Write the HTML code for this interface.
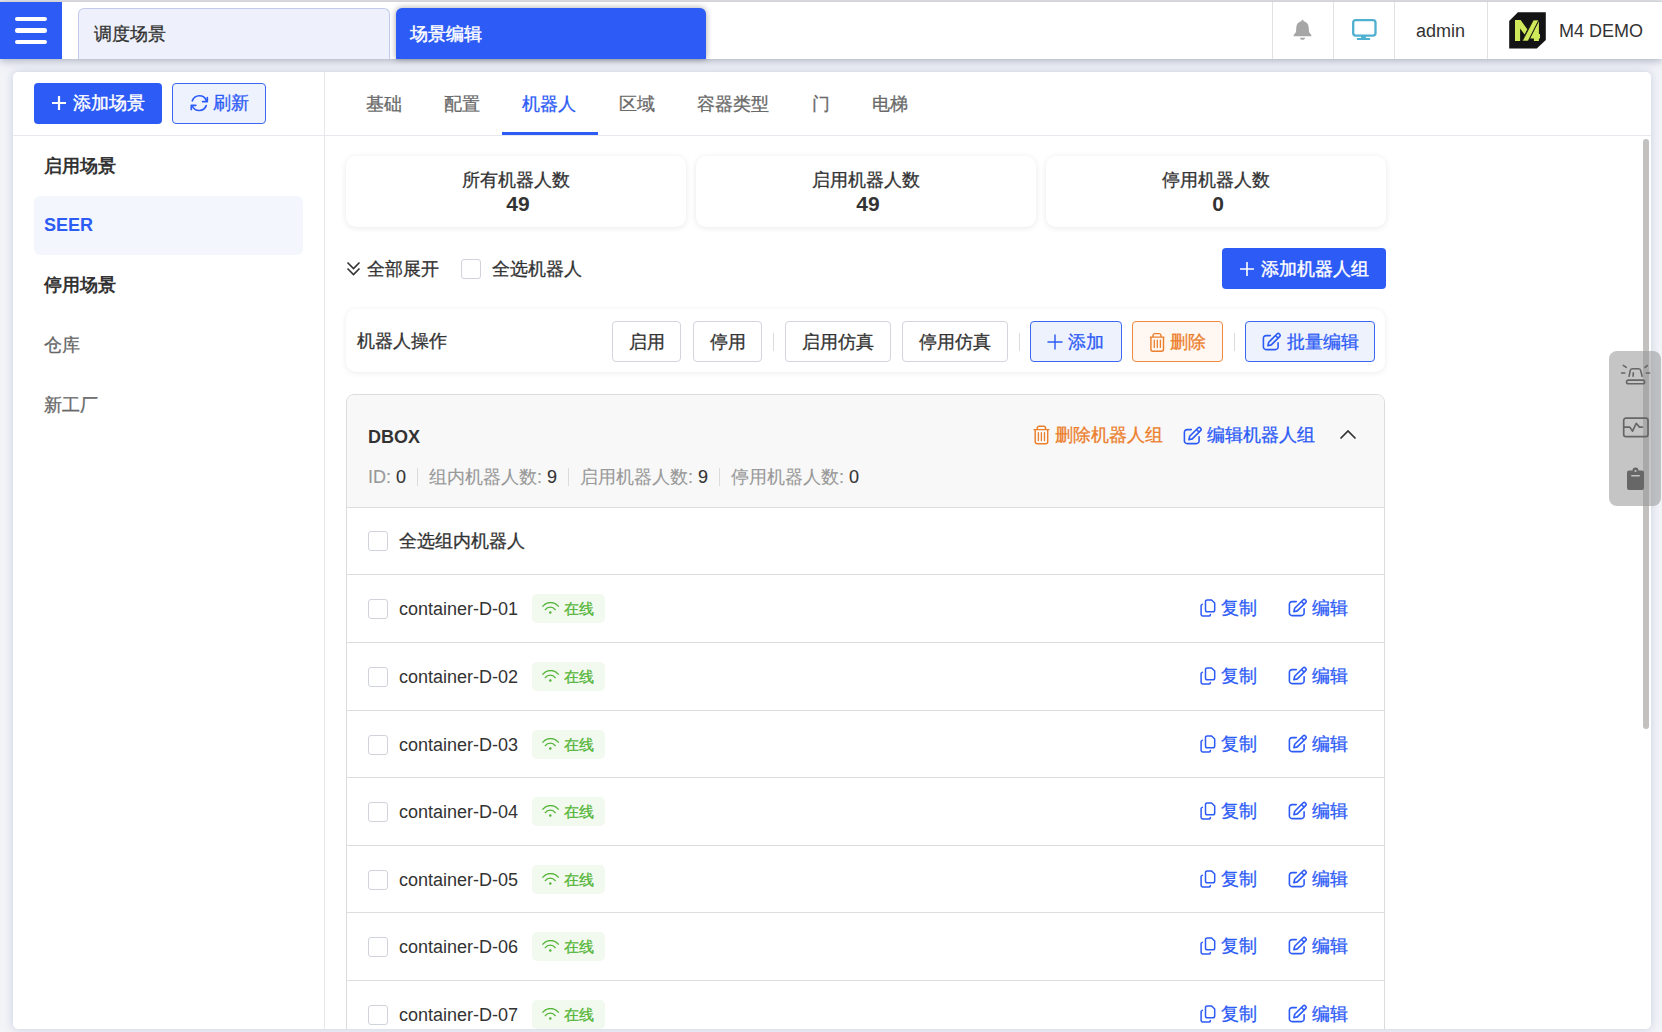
<!DOCTYPE html>
<html><head><meta charset="utf-8">
<style>
*{box-sizing:border-box;margin:0;padding:0}
html,body{width:1662px;height:1032px;overflow:hidden}
body{font-family:"Liberation Sans",sans-serif;font-size:18px;-webkit-text-stroke:0.3px currentColor;color:#333;background:#f2f4f8;position:relative}
.a{position:absolute}
svg{display:block}
.topline{left:0;top:0;width:1662px;height:1px;background:#e8ebf2}
.header{left:0;top:1px;width:1662px;height:58px;background:#fff;border-top:1px solid #d4d4d4;box-shadow:0 2px 8px rgba(100,112,140,.5)}
.ham{left:0;top:2px;width:62px;height:57px;background:#2d5bf6}
.ham i{position:absolute;left:15px;width:32px;height:4.6px;border-radius:2.3px;background:#fff}
.tab{top:7px;height:52px;border-radius:6px 6px 0 0;line-height:52px;padding-left:14px}
.tab1{left:78px;top:7.6px;height:51.4px;width:312px;background:#eef1fc;border:1px solid #c3c9e8;border-bottom:none;color:#333;padding-left:15px;line-height:51px}
.tab2{left:396px;width:310px;top:8px;height:51px;background:#2d5bf6;color:#fff;-webkit-text-stroke:0.45px #fff;box-shadow:0 0 6px rgba(0,0,0,.35)}
.sep{top:2px;width:1px;height:57px;background:#e2e2e2}
.card{left:13px;top:72px;width:1638px;height:957px;background:#fff;border-radius:5px;box-shadow:0 0 10px rgba(150,160,190,.45);overflow:hidden}
.vline{left:311px;top:0;width:1px;height:957px;background:#e8e8ea}
.hline{left:0;top:63px;width:1638px;height:1px;background:#e6e8ee}
.btn{height:41px;border-radius:4px;display:flex;align-items:center;justify-content:center;line-height:20px}
.bprim{background:#2d5bf6;color:#fff;-webkit-text-stroke:0.4px #fff}
.bout{background:#edf2fd;border:1px solid #3a66f2;color:#2d5bf6}
.bdef{background:#fff;border:1px solid #d3d5dd;color:#333}
.bor{background:#fff8f2;border:1px solid #f0893d;color:#ec7f2c}
.nav{left:31px;line-height:24px}
.tabs div{position:absolute;top:19.6px;line-height:24px;color:#6a6a6a}
.stat{top:156px;width:340px;height:71px;background:#fff;border-radius:10px;box-shadow:0 1px 6px rgba(0,0,0,.09);text-align:center}
.stat .t{position:absolute;left:0;right:0;top:12px;line-height:24px}
.stat .n{-webkit-text-stroke:0;position:absolute;left:4px;right:0;top:36px;line-height:24px;font-weight:bold;font-size:21px}
.cb{width:20px;height:20px;border:1px solid #d0d3dc;border-radius:3px;background:#fff}
.dv{width:1px;height:18px;background:#dcdcdc}
.tag{height:29px;padding:0 11.5px 0 9.5px;background:#f2f9ef;border-radius:5px;display:flex;align-items:center;color:#52b536;font-size:15px;line-height:20px}
.tag span{position:relative;top:0px}
.tag svg{margin-right:5px}
.act{display:flex;align-items:center;color:#2d5bf6;line-height:24px}
.act svg{margin-right:5px}
.act.r{margin-top:-1px}
.g{color:#999}
.lt{-webkit-text-stroke:0}
.dv2{display:inline-block;width:1px;height:18px;background:#dcdcdc;margin:0 11px;vertical-align:-3px}
</style></head><body>
<div class="a topline"></div>
<div class="a header"></div>
<div class="a ham"><i style="top:14.8px"></i><i style="top:26.2px"></i><i style="top:37.6px"></i></div>
<div class="a tab tab1">调度场景</div>
<div class="a tab tab2">场景编辑</div>
<div class="a sep" style="left:1272px"></div>
<div class="a sep" style="left:1333px"></div>
<div class="a sep" style="left:1394px"></div>
<div class="a sep" style="left:1487px"></div>
<!-- bell -->
<svg class="a" style="left:1292px;top:19px" width="21" height="23" viewBox="0 0 21 23"><path d="M10.5 0.8C11.3 0.8 11.6 1.5 11.6 2.2C14.6 2.9 16.5 5 16.7 8.2L17 13.1L19.4 16.2V17.2H1.6V16.2L4 13.1L4.3 8.2C4.5 5 6.4 2.9 9.4 2.2C9.4 1.5 9.7 0.8 10.5 0.8Z" fill="#a6a6a6"/><path d="M8 18.7H13C13 20 11.9 20.8 10.5 20.8S8 20 8 18.7Z" fill="#a6a6a6"/></svg>
<!-- monitor -->
<svg class="a" style="left:1351px;top:18px" width="26" height="24" viewBox="0 0 26 24"><rect x="2.2" y="2.2" width="22.3" height="15.4" rx="2.6" fill="none" stroke="#4fb0d0" stroke-width="2.3"/><rect x="10.1" y="18" width="4.8" height="2.2" fill="#4fb0d0"/><rect x="5.9" y="19.9" width="13.2" height="2.1" rx="0.6" fill="#4fb0d0"/></svg>
<div class="a lt" style="left:1416px;top:19px;line-height:24px">admin</div>
<!-- logo -->
<svg class="a" style="left:1509px;top:12px" width="37" height="37" viewBox="0 0 37 37"><path d="M0.2 9L8.9 0.3H36.8V27.9L27.8 36.6H0.2z" fill="#141414"/><path d="M6 8H11.6L18.3 17.3 15.6 22.6 11.1 16.4V29.1H6z" fill="#d0e95a"/><path d="M29.9 9.2V22.1H31V26.4H29.9V29.1H24.9V26.4H21.2z" fill="#d0e95a"/><path d="M13.3 29.1H19.1L29.8 8H24.4z" fill="#d0e95a" stroke="#141414" stroke-width="0.7"/></svg>
<div class="a lt" style="left:1559px;top:19px;line-height:24px">M4 DEMO</div>

<div class="a card">
  <div class="a vline"></div>
  <div class="a hline"></div>
  <div class="a btn bprim" style="left:21px;top:10.5px;width:128px"><svg width="16" height="16" viewBox="0 0 16 16" style="margin-right:6px"><path d="M8 1v14M1 8h14" stroke="#fff" stroke-width="2.2"/></svg>添加场景</div>
  <div class="a btn bout" style="left:159px;top:10.5px;width:94px"><svg width="19" height="18" viewBox="0 0 19 18" style="margin-right:4px"><path d="M2.3 6.8A7.5 7.5 0 0 1 16.4 6.6" fill="none" stroke="#2d5bf6" stroke-width="1.7" stroke-linecap="round"/><path d="M17.3 3.5V7.6H12.6" fill="none" stroke="#2d5bf6" stroke-width="1.7" stroke-linecap="round" stroke-linejoin="round"/><path d="M16.2 11.6A7.5 7.5 0 0 1 2.3 12" fill="none" stroke="#2d5bf6" stroke-width="1.7" stroke-linecap="round"/><path d="M1.3 15.5V11.3H5.8" fill="none" stroke="#2d5bf6" stroke-width="1.7" stroke-linecap="round" stroke-linejoin="round"/></svg>刷新</div>
  <div class="a nav lt" style="top:81.5px;font-weight:bold">启用场景</div>
  <div class="a" style="left:21px;top:124px;width:268.5px;height:59px;background:#f3f6fd;border-radius:6px"></div>
  <div class="a nav lt" style="top:141px;font-weight:bold;color:#2d5bf6">SEER</div>
  <div class="a nav lt" style="top:201px;font-weight:bold">停用场景</div>
  <div class="a nav" style="top:261px;color:#666">仓库</div>
  <div class="a nav" style="top:321px;color:#666">新工厂</div>

  <div class="tabs">
    <div style="left:353px">基础</div>
    <div style="left:431px">配置</div>
    <div style="left:509px;color:#2d5bf6">机器人</div>
    <div style="left:606px">区域</div>
    <div style="left:684px">容器类型</div>
    <div style="left:799px">门</div>
    <div style="left:859px">电梯</div>
  </div>
  <div class="a" style="left:489px;top:60px;width:96px;height:2.5px;background:#2d5bf6"></div>
  <div class="a content" style="left:312px;top:64px;width:1326px;height:893px;overflow:hidden">
    <div class="a stat" style="left:21px;top:20px"><div class="t">所有机器人数</div><div class="n">49</div></div>
    <div class="a stat" style="left:371px;top:20px"><div class="t">启用机器人数</div><div class="n">49</div></div>
    <div class="a stat" style="left:721px;top:20px"><div class="t">停用机器人数</div><div class="n">0</div></div>
    <svg class="a" style="left:21px;top:124px" width="15" height="16" viewBox="0 0 15 16"><path d="M1.5 2.5l6 6 6-6M1.5 8.5l6 6 6-6" fill="none" stroke="#333" stroke-width="1.6"/></svg>
    <div class="a" style="left:42px;top:120.5px;line-height:24px">全部展开</div>
    <div class="a cb" style="left:136px;top:123px"></div>
    <div class="a" style="left:167px;top:120.5px;line-height:24px">全选机器人</div>
    <div class="a btn bprim" style="left:897px;top:112px;width:164px"><svg width="16" height="16" viewBox="0 0 16 16" style="margin-right:6px"><path d="M8 1v14M1 8h14" stroke="#fff" stroke-width="1.6"/></svg>添加机器人组</div>
    <div class="a toolbar" style="left:21px;top:173px;width:1039px;height:63px;background:#fff;border-radius:10px;box-shadow:0 1px 6px rgba(0,0,0,.08)">
      <div class="a" style="left:11px;top:20px;line-height:24px">机器人操作</div>
      <div class="a btn bdef" style="left:266px;top:12px;width:69px">启用</div>
      <div class="a btn bdef" style="left:347px;top:12px;width:69px">停用</div>
      <div class="a dv" style="left:427px;top:24px"></div>
      <div class="a btn bdef" style="left:439px;top:12px;width:106px">启用仿真</div>
      <div class="a btn bdef" style="left:556px;top:12px;width:106px">停用仿真</div>
      <div class="a dv" style="left:673px;top:24px"></div>
      <div class="a btn bout" style="left:684px;top:12px;width:92px"><svg width="16" height="16" viewBox="0 0 16 16" style="margin-right:5px;margin-left:-1px"><path d="M8 0.5v15M0.5 8h15" stroke="#2d5bf6" stroke-width="1.45"/></svg>添加</div>
      <div class="a btn bor" style="left:786px;top:12px;width:91px"><svg width="16" height="20" viewBox="0 0 16 20" style="margin-right:5px"><path d="M4 5V3.6A2 2 0 0 1 6 1.6H10A2 2 0 0 1 12 3.6V5M0.8 5.1H15.4M1.9 5.1V17.2A2 2 0 0 0 3.9 19.2H12.5A2 2 0 0 0 14.5 17.2V5.1" fill="none" stroke="#ec7f2c" stroke-width="1.45" stroke-linejoin="round"/><path d="M5.3 8.2V15.4M8.3 8.2V15.4M11.4 8.2V15.4" stroke="#ec7f2c" stroke-width="1.3" stroke-linecap="round"/></svg>删除</div>
      <div class="a dv" style="left:888px;top:24px"></div>
      <div class="a btn bout" style="left:899px;top:12px;width:130px"><svg width="19" height="19" viewBox="0 0 19 19" style="margin-right:6px"><path d="M8.3 3.6H4.1A2.7 2.7 0 0 0 1.4 6.3V14.9A2.7 2.7 0 0 0 4.1 17.6H13.4A2.7 2.7 0 0 0 16.1 14.9V10.8" fill="none" stroke="#2d5bf6" stroke-width="1.6" stroke-linecap="round"/><path d="M5.9 13.7L6.7 10.3L15 2A1.7 1.7 0 0 1 17.4 2L17.6 2.2A1.7 1.7 0 0 1 17.6 4.6L9.3 12.9Z" fill="none" stroke="#2d5bf6" stroke-width="1.6" stroke-linejoin="round"/><path d="M13.6 3.6L16 6" stroke="#2d5bf6" stroke-width="1.5"/></svg>批量编辑</div>
    </div>
    <div class="a group" style="left:21px;top:258px;width:1039px;height:700px;border:1px solid #dcdcdc;border-radius:8px;overflow:hidden">
      <div class="a" style="left:0;top:0;width:1037px;height:113px;background:#f8f8f8;border-bottom:1px solid #dedede">
  <div class="a lt" style="left:21px;top:30px;line-height:24px;font-weight:bold">DBOX</div>
  <div class="a idl" style="left:21px;top:69.5px;line-height:24px;-webkit-text-stroke:0.12px currentColor"><span class="g">ID:</span> 0<i class="dv2"></i><span class="g">组内机器人数:</span> 9<i class="dv2"></i><span class="g">启用机器人数:</span> 9<i class="dv2"></i><span class="g">停用机器人数:</span> 0</div>
  <div class="a act" style="left:686px;top:28px;color:#ec7f2c"><svg width="17" height="20" viewBox="0 0 17 20"><path d="M4.2 4.5V3.3A2 2 0 0 1 6.2 1.3H10.6A2 2 0 0 1 12.6 3.3V4.5M0.6 4.6H16.3M2.2 4.6V16.7A2 2 0 0 0 4.2 18.7H12.7A2 2 0 0 0 14.7 16.7V4.6" fill="none" stroke="#ec7f2c" stroke-width="1.45" stroke-linejoin="round"/><path d="M5.4 7.6V15.5M8.4 7.6V15.5M11.5 7.6V15.5" stroke="#ec7f2c" stroke-width="1.3" stroke-linecap="round"/></svg><span>删除机器人组</span></div>
  <div class="a act" style="left:836px;top:28px"><svg width="19" height="19" viewBox="0 0 19 19"><path d="M8.3 3.6H4.1A2.7 2.7 0 0 0 1.4 6.3V14.9A2.7 2.7 0 0 0 4.1 17.6H13.4A2.7 2.7 0 0 0 16.1 14.9V10.8" fill="none" stroke="#2d5bf6" stroke-width="1.6" stroke-linecap="round"/><path d="M5.9 13.7L6.7 10.3L15 2A1.7 1.7 0 0 1 17.4 2L17.6 2.2A1.7 1.7 0 0 1 17.6 4.6L9.3 12.9Z" fill="none" stroke="#2d5bf6" stroke-width="1.6" stroke-linejoin="round"/><path d="M13.6 3.6L16 6" stroke="#2d5bf6" stroke-width="1.5"/></svg><span>编辑机器人组</span></div>
  <svg class="a" style="left:992px;top:34px" width="18" height="11" viewBox="0 0 18 11"><path d="M1.5 9.5l7.5-7.5 7.5 7.5" fill="none" stroke="#333" stroke-width="1.7"/></svg>
</div>
<div class="a row" style="left:0;top:112.5px;width:1037px;height:67.5px;border-bottom:1px solid #dedede"><div class="a cb" style="left:21px;top:23.75px"></div><div class="a" style="left:52px;top:21.75px;line-height:24px">全选组内机器人</div></div>
<div class="a row" style="left:0;top:180px;width:1037px;height:68px;border-bottom:1px solid #dedede"><div class="a cb" style="left:21px;top:23.75px"></div><div class="a" style="left:52px;top:21.75px;line-height:24px;-webkit-text-stroke:0">container-D-01</div><div class="a tag" style="left:185px;top:19.25px"><svg width="17" height="13" viewBox="0 0 17 13"><path d="M0.9 4.2A9.9 9.9 0 0 1 16.3 4.2M3.3 7.6A6.1 6.1 0 0 1 13.2 7.6" fill="none" stroke="#52b536" stroke-width="1.35" stroke-linecap="round"/><circle cx="8.3" cy="10.4" r="1.25" fill="#52b536"/></svg><span>在线</span></div><div class="a act r" style="left:852px;top:21.75px"><svg width="18" height="20" viewBox="0 0 18 20" style="margin-right:4px"><path d="M6.5 3.6A1.7 1.7 0 0 1 8.2 1.9H12.6L15.7 5.1V12A1.8 1.8 0 0 1 13.9 13.8H8.3A1.8 1.8 0 0 1 6.5 12Z" fill="none" stroke="#2d5bf6" stroke-width="1.5" stroke-linejoin="round"/><path d="M3.4 6.2L2.1 7.3V15.9A2.2 2.2 0 0 0 4.3 18.1H9.8A1.6 1.6 0 0 0 11.4 16.6" fill="none" stroke="#2d5bf6" stroke-width="1.5" stroke-linecap="round" stroke-linejoin="round"/></svg><span>复制</span></div><div class="a act r" style="left:941px;top:21.75px"><svg width="19" height="19" viewBox="0 0 19 19"><path d="M8.3 3.6H4.1A2.7 2.7 0 0 0 1.4 6.3V14.9A2.7 2.7 0 0 0 4.1 17.6H13.4A2.7 2.7 0 0 0 16.1 14.9V10.8" fill="none" stroke="#2d5bf6" stroke-width="1.6" stroke-linecap="round"/><path d="M5.9 13.7L6.7 10.3L15 2A1.7 1.7 0 0 1 17.4 2L17.6 2.2A1.7 1.7 0 0 1 17.6 4.6L9.3 12.9Z" fill="none" stroke="#2d5bf6" stroke-width="1.6" stroke-linejoin="round"/><path d="M13.6 3.6L16 6" stroke="#2d5bf6" stroke-width="1.5"/></svg><span>编辑</span></div></div>
<div class="a row" style="left:0;top:248px;width:1037px;height:68px;border-bottom:1px solid #dedede"><div class="a cb" style="left:21px;top:23.75px"></div><div class="a" style="left:52px;top:21.75px;line-height:24px;-webkit-text-stroke:0">container-D-02</div><div class="a tag" style="left:185px;top:19.25px"><svg width="17" height="13" viewBox="0 0 17 13"><path d="M0.9 4.2A9.9 9.9 0 0 1 16.3 4.2M3.3 7.6A6.1 6.1 0 0 1 13.2 7.6" fill="none" stroke="#52b536" stroke-width="1.35" stroke-linecap="round"/><circle cx="8.3" cy="10.4" r="1.25" fill="#52b536"/></svg><span>在线</span></div><div class="a act r" style="left:852px;top:21.75px"><svg width="18" height="20" viewBox="0 0 18 20" style="margin-right:4px"><path d="M6.5 3.6A1.7 1.7 0 0 1 8.2 1.9H12.6L15.7 5.1V12A1.8 1.8 0 0 1 13.9 13.8H8.3A1.8 1.8 0 0 1 6.5 12Z" fill="none" stroke="#2d5bf6" stroke-width="1.5" stroke-linejoin="round"/><path d="M3.4 6.2L2.1 7.3V15.9A2.2 2.2 0 0 0 4.3 18.1H9.8A1.6 1.6 0 0 0 11.4 16.6" fill="none" stroke="#2d5bf6" stroke-width="1.5" stroke-linecap="round" stroke-linejoin="round"/></svg><span>复制</span></div><div class="a act r" style="left:941px;top:21.75px"><svg width="19" height="19" viewBox="0 0 19 19"><path d="M8.3 3.6H4.1A2.7 2.7 0 0 0 1.4 6.3V14.9A2.7 2.7 0 0 0 4.1 17.6H13.4A2.7 2.7 0 0 0 16.1 14.9V10.8" fill="none" stroke="#2d5bf6" stroke-width="1.6" stroke-linecap="round"/><path d="M5.9 13.7L6.7 10.3L15 2A1.7 1.7 0 0 1 17.4 2L17.6 2.2A1.7 1.7 0 0 1 17.6 4.6L9.3 12.9Z" fill="none" stroke="#2d5bf6" stroke-width="1.6" stroke-linejoin="round"/><path d="M13.6 3.6L16 6" stroke="#2d5bf6" stroke-width="1.5"/></svg><span>编辑</span></div></div>
<div class="a row" style="left:0;top:316px;width:1037px;height:67px;border-bottom:1px solid #dedede"><div class="a cb" style="left:21px;top:23.75px"></div><div class="a" style="left:52px;top:21.75px;line-height:24px;-webkit-text-stroke:0">container-D-03</div><div class="a tag" style="left:185px;top:19.25px"><svg width="17" height="13" viewBox="0 0 17 13"><path d="M0.9 4.2A9.9 9.9 0 0 1 16.3 4.2M3.3 7.6A6.1 6.1 0 0 1 13.2 7.6" fill="none" stroke="#52b536" stroke-width="1.35" stroke-linecap="round"/><circle cx="8.3" cy="10.4" r="1.25" fill="#52b536"/></svg><span>在线</span></div><div class="a act r" style="left:852px;top:21.75px"><svg width="18" height="20" viewBox="0 0 18 20" style="margin-right:4px"><path d="M6.5 3.6A1.7 1.7 0 0 1 8.2 1.9H12.6L15.7 5.1V12A1.8 1.8 0 0 1 13.9 13.8H8.3A1.8 1.8 0 0 1 6.5 12Z" fill="none" stroke="#2d5bf6" stroke-width="1.5" stroke-linejoin="round"/><path d="M3.4 6.2L2.1 7.3V15.9A2.2 2.2 0 0 0 4.3 18.1H9.8A1.6 1.6 0 0 0 11.4 16.6" fill="none" stroke="#2d5bf6" stroke-width="1.5" stroke-linecap="round" stroke-linejoin="round"/></svg><span>复制</span></div><div class="a act r" style="left:941px;top:21.75px"><svg width="19" height="19" viewBox="0 0 19 19"><path d="M8.3 3.6H4.1A2.7 2.7 0 0 0 1.4 6.3V14.9A2.7 2.7 0 0 0 4.1 17.6H13.4A2.7 2.7 0 0 0 16.1 14.9V10.8" fill="none" stroke="#2d5bf6" stroke-width="1.6" stroke-linecap="round"/><path d="M5.9 13.7L6.7 10.3L15 2A1.7 1.7 0 0 1 17.4 2L17.6 2.2A1.7 1.7 0 0 1 17.6 4.6L9.3 12.9Z" fill="none" stroke="#2d5bf6" stroke-width="1.6" stroke-linejoin="round"/><path d="M13.6 3.6L16 6" stroke="#2d5bf6" stroke-width="1.5"/></svg><span>编辑</span></div></div>
<div class="a row" style="left:0;top:383px;width:1037px;height:68px;border-bottom:1px solid #dedede"><div class="a cb" style="left:21px;top:23.75px"></div><div class="a" style="left:52px;top:21.75px;line-height:24px;-webkit-text-stroke:0">container-D-04</div><div class="a tag" style="left:185px;top:19.25px"><svg width="17" height="13" viewBox="0 0 17 13"><path d="M0.9 4.2A9.9 9.9 0 0 1 16.3 4.2M3.3 7.6A6.1 6.1 0 0 1 13.2 7.6" fill="none" stroke="#52b536" stroke-width="1.35" stroke-linecap="round"/><circle cx="8.3" cy="10.4" r="1.25" fill="#52b536"/></svg><span>在线</span></div><div class="a act r" style="left:852px;top:21.75px"><svg width="18" height="20" viewBox="0 0 18 20" style="margin-right:4px"><path d="M6.5 3.6A1.7 1.7 0 0 1 8.2 1.9H12.6L15.7 5.1V12A1.8 1.8 0 0 1 13.9 13.8H8.3A1.8 1.8 0 0 1 6.5 12Z" fill="none" stroke="#2d5bf6" stroke-width="1.5" stroke-linejoin="round"/><path d="M3.4 6.2L2.1 7.3V15.9A2.2 2.2 0 0 0 4.3 18.1H9.8A1.6 1.6 0 0 0 11.4 16.6" fill="none" stroke="#2d5bf6" stroke-width="1.5" stroke-linecap="round" stroke-linejoin="round"/></svg><span>复制</span></div><div class="a act r" style="left:941px;top:21.75px"><svg width="19" height="19" viewBox="0 0 19 19"><path d="M8.3 3.6H4.1A2.7 2.7 0 0 0 1.4 6.3V14.9A2.7 2.7 0 0 0 4.1 17.6H13.4A2.7 2.7 0 0 0 16.1 14.9V10.8" fill="none" stroke="#2d5bf6" stroke-width="1.6" stroke-linecap="round"/><path d="M5.9 13.7L6.7 10.3L15 2A1.7 1.7 0 0 1 17.4 2L17.6 2.2A1.7 1.7 0 0 1 17.6 4.6L9.3 12.9Z" fill="none" stroke="#2d5bf6" stroke-width="1.6" stroke-linejoin="round"/><path d="M13.6 3.6L16 6" stroke="#2d5bf6" stroke-width="1.5"/></svg><span>编辑</span></div></div>
<div class="a row" style="left:0;top:451px;width:1037px;height:67px;border-bottom:1px solid #dedede"><div class="a cb" style="left:21px;top:23.75px"></div><div class="a" style="left:52px;top:21.75px;line-height:24px;-webkit-text-stroke:0">container-D-05</div><div class="a tag" style="left:185px;top:19.25px"><svg width="17" height="13" viewBox="0 0 17 13"><path d="M0.9 4.2A9.9 9.9 0 0 1 16.3 4.2M3.3 7.6A6.1 6.1 0 0 1 13.2 7.6" fill="none" stroke="#52b536" stroke-width="1.35" stroke-linecap="round"/><circle cx="8.3" cy="10.4" r="1.25" fill="#52b536"/></svg><span>在线</span></div><div class="a act r" style="left:852px;top:21.75px"><svg width="18" height="20" viewBox="0 0 18 20" style="margin-right:4px"><path d="M6.5 3.6A1.7 1.7 0 0 1 8.2 1.9H12.6L15.7 5.1V12A1.8 1.8 0 0 1 13.9 13.8H8.3A1.8 1.8 0 0 1 6.5 12Z" fill="none" stroke="#2d5bf6" stroke-width="1.5" stroke-linejoin="round"/><path d="M3.4 6.2L2.1 7.3V15.9A2.2 2.2 0 0 0 4.3 18.1H9.8A1.6 1.6 0 0 0 11.4 16.6" fill="none" stroke="#2d5bf6" stroke-width="1.5" stroke-linecap="round" stroke-linejoin="round"/></svg><span>复制</span></div><div class="a act r" style="left:941px;top:21.75px"><svg width="19" height="19" viewBox="0 0 19 19"><path d="M8.3 3.6H4.1A2.7 2.7 0 0 0 1.4 6.3V14.9A2.7 2.7 0 0 0 4.1 17.6H13.4A2.7 2.7 0 0 0 16.1 14.9V10.8" fill="none" stroke="#2d5bf6" stroke-width="1.6" stroke-linecap="round"/><path d="M5.9 13.7L6.7 10.3L15 2A1.7 1.7 0 0 1 17.4 2L17.6 2.2A1.7 1.7 0 0 1 17.6 4.6L9.3 12.9Z" fill="none" stroke="#2d5bf6" stroke-width="1.6" stroke-linejoin="round"/><path d="M13.6 3.6L16 6" stroke="#2d5bf6" stroke-width="1.5"/></svg><span>编辑</span></div></div>
<div class="a row" style="left:0;top:518px;width:1037px;height:68px;border-bottom:1px solid #dedede"><div class="a cb" style="left:21px;top:23.75px"></div><div class="a" style="left:52px;top:21.75px;line-height:24px;-webkit-text-stroke:0">container-D-06</div><div class="a tag" style="left:185px;top:19.25px"><svg width="17" height="13" viewBox="0 0 17 13"><path d="M0.9 4.2A9.9 9.9 0 0 1 16.3 4.2M3.3 7.6A6.1 6.1 0 0 1 13.2 7.6" fill="none" stroke="#52b536" stroke-width="1.35" stroke-linecap="round"/><circle cx="8.3" cy="10.4" r="1.25" fill="#52b536"/></svg><span>在线</span></div><div class="a act r" style="left:852px;top:21.75px"><svg width="18" height="20" viewBox="0 0 18 20" style="margin-right:4px"><path d="M6.5 3.6A1.7 1.7 0 0 1 8.2 1.9H12.6L15.7 5.1V12A1.8 1.8 0 0 1 13.9 13.8H8.3A1.8 1.8 0 0 1 6.5 12Z" fill="none" stroke="#2d5bf6" stroke-width="1.5" stroke-linejoin="round"/><path d="M3.4 6.2L2.1 7.3V15.9A2.2 2.2 0 0 0 4.3 18.1H9.8A1.6 1.6 0 0 0 11.4 16.6" fill="none" stroke="#2d5bf6" stroke-width="1.5" stroke-linecap="round" stroke-linejoin="round"/></svg><span>复制</span></div><div class="a act r" style="left:941px;top:21.75px"><svg width="19" height="19" viewBox="0 0 19 19"><path d="M8.3 3.6H4.1A2.7 2.7 0 0 0 1.4 6.3V14.9A2.7 2.7 0 0 0 4.1 17.6H13.4A2.7 2.7 0 0 0 16.1 14.9V10.8" fill="none" stroke="#2d5bf6" stroke-width="1.6" stroke-linecap="round"/><path d="M5.9 13.7L6.7 10.3L15 2A1.7 1.7 0 0 1 17.4 2L17.6 2.2A1.7 1.7 0 0 1 17.6 4.6L9.3 12.9Z" fill="none" stroke="#2d5bf6" stroke-width="1.6" stroke-linejoin="round"/><path d="M13.6 3.6L16 6" stroke="#2d5bf6" stroke-width="1.5"/></svg><span>编辑</span></div></div>
<div class="a row" style="left:0;top:586px;width:1037px;height:67px;border-bottom:1px solid #dedede"><div class="a cb" style="left:21px;top:23.75px"></div><div class="a" style="left:52px;top:21.75px;line-height:24px;-webkit-text-stroke:0">container-D-07</div><div class="a tag" style="left:185px;top:19.25px"><svg width="17" height="13" viewBox="0 0 17 13"><path d="M0.9 4.2A9.9 9.9 0 0 1 16.3 4.2M3.3 7.6A6.1 6.1 0 0 1 13.2 7.6" fill="none" stroke="#52b536" stroke-width="1.35" stroke-linecap="round"/><circle cx="8.3" cy="10.4" r="1.25" fill="#52b536"/></svg><span>在线</span></div><div class="a act r" style="left:852px;top:21.75px"><svg width="18" height="20" viewBox="0 0 18 20" style="margin-right:4px"><path d="M6.5 3.6A1.7 1.7 0 0 1 8.2 1.9H12.6L15.7 5.1V12A1.8 1.8 0 0 1 13.9 13.8H8.3A1.8 1.8 0 0 1 6.5 12Z" fill="none" stroke="#2d5bf6" stroke-width="1.5" stroke-linejoin="round"/><path d="M3.4 6.2L2.1 7.3V15.9A2.2 2.2 0 0 0 4.3 18.1H9.8A1.6 1.6 0 0 0 11.4 16.6" fill="none" stroke="#2d5bf6" stroke-width="1.5" stroke-linecap="round" stroke-linejoin="round"/></svg><span>复制</span></div><div class="a act r" style="left:941px;top:21.75px"><svg width="19" height="19" viewBox="0 0 19 19"><path d="M8.3 3.6H4.1A2.7 2.7 0 0 0 1.4 6.3V14.9A2.7 2.7 0 0 0 4.1 17.6H13.4A2.7 2.7 0 0 0 16.1 14.9V10.8" fill="none" stroke="#2d5bf6" stroke-width="1.6" stroke-linecap="round"/><path d="M5.9 13.7L6.7 10.3L15 2A1.7 1.7 0 0 1 17.4 2L17.6 2.2A1.7 1.7 0 0 1 17.6 4.6L9.3 12.9Z" fill="none" stroke="#2d5bf6" stroke-width="1.6" stroke-linejoin="round"/><path d="M13.6 3.6L16 6" stroke="#2d5bf6" stroke-width="1.5"/></svg><span>编辑</span></div></div>

    </div>
  </div>
</div>
<div class="a" style="left:1643px;top:139px;width:5.5px;height:590px;border-radius:3px;background:#c2c1c0"></div>
<div class="a" style="left:1609px;top:350.5px;width:52px;height:155px;border-radius:8px;background:rgba(150,150,150,.55)"></div>
<svg class="a" style="left:1620px;top:362px" width="32" height="24" viewBox="0 0 32 24"><path d="M9.1 14.3L10.2 8.6A2.2 2.2 0 0 1 12.3 6.8H18.6A2.2 2.2 0 0 1 20.7 8.6L22.1 14.3" fill="none" stroke="#666" stroke-width="1.6" stroke-linecap="round"/><rect x="6.6" y="18.1" width="18" height="3.7" rx="1.85" fill="none" stroke="#666" stroke-width="1.6"/><path d="M13.3 10.9L13.1 14.2M3.3 3.4L6.3 5.4M1.6 11H4.8M27.3 3.6L25 5.4M26.4 11H29.6" stroke="#666" stroke-width="1.6" stroke-linecap="round"/></svg>
<svg class="a" style="left:1622px;top:416px" width="27" height="22" viewBox="0 0 27 22"><rect x="1.7" y="2.2" width="24.3" height="18.4" rx="2.2" fill="none" stroke="#666" stroke-width="1.7"/><path d="M2.2 11.1H7.8L10.6 15.2 14.2 7.4 17.5 11.1H20.4" fill="none" stroke="#666" stroke-width="1.6" stroke-linejoin="round" stroke-linecap="round"/></svg>
<svg class="a" style="left:1626px;top:467px" width="19" height="24" viewBox="0 0 19 24"><path d="M6.5 3.5a3 3 0 0 1 6 0H16a2 2 0 0 1 2 2V21a2 2 0 0 1-2 2H3a2 2 0 0 1-2-2V5.5a2 2 0 0 1 2-2z" fill="#676767"/><circle cx="9.5" cy="4" r="1.1" fill="#c2c2c2"/><rect x="5" y="8" width="9" height="1.6" rx=".8" fill="#c2c2c2"/></svg>
</body></html>
